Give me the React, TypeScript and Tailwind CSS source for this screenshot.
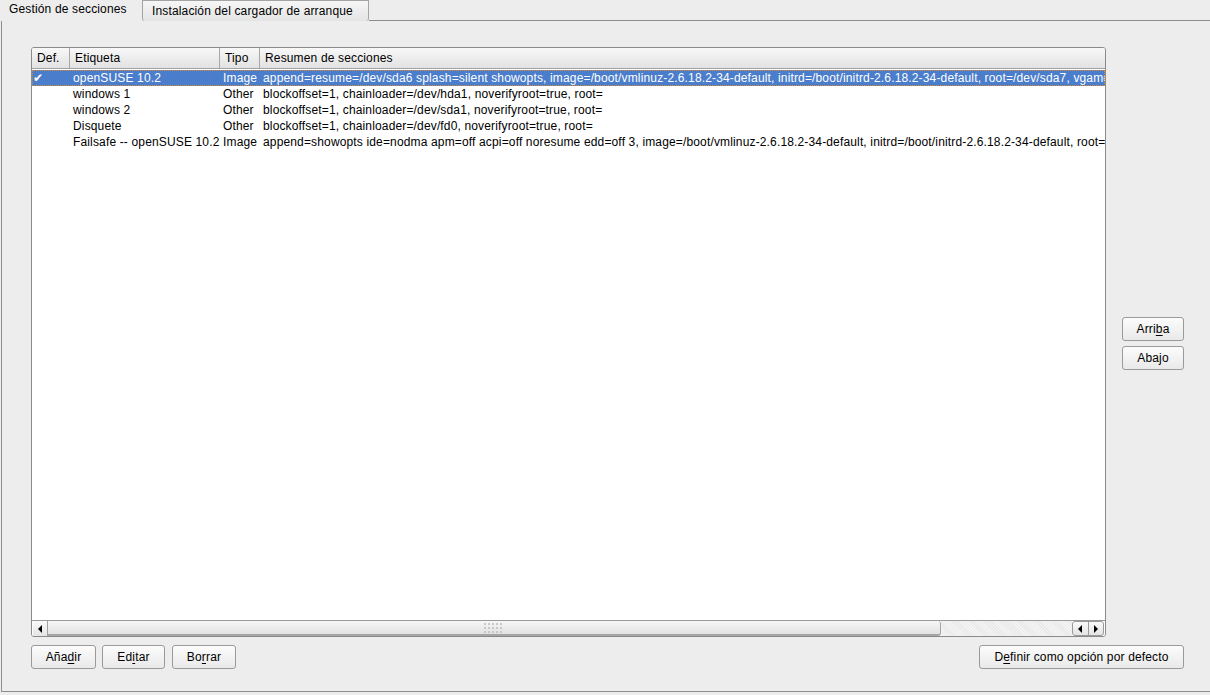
import React from "react";

type Row = { def: boolean; label: string; type: string; summary: string };

const ROWS: Row[] = [
  {
    def: true,
    label: "openSUSE 10.2",
    type: "Image",
    summary:
      "append=resume=/dev/sda6 splash=silent showopts, image=/boot/vmlinuz-2.6.18.2-34-default, initrd=/boot/initrd-2.6.18.2-34-default, root=/dev/sda7, vgamode=0x314",
  },
  { def: false, label: "windows 1", type: "Other", summary: "blockoffset=1, chainloader=/dev/hda1, noverifyroot=true, root=" },
  { def: false, label: "windows 2", type: "Other", summary: "blockoffset=1, chainloader=/dev/sda1, noverifyroot=true, root=" },
  { def: false, label: "Disquete", type: "Other", summary: "blockoffset=1, chainloader=/dev/fd0, noverifyroot=true, root=" },
  {
    def: false,
    label: "Failsafe -- openSUSE 10.2",
    type: "Image",
    summary:
      "append=showopts ide=nodma apm=off acpi=off noresume edd=off 3, image=/boot/vmlinuz-2.6.18.2-34-default, initrd=/boot/initrd-2.6.18.2-34-default, root=/dev/sda7",
  },
];

// button with an underlined mnemonic letter
function Btn({ pre, key_, post, w }: { pre: string; key_: string; post: string; w: string }) {
  return (
    <button
      className={`${w} h-[24px] rounded-[3px] border border-[#9a9a9a] bg-gradient-to-b from-[#fcfcfc] to-[#e9e9e9] text-[12px] text-black leading-none flex items-center justify-center`}
    >
      {pre}
      <span className="underline underline-offset-2">{key_}</span>
      {post}
    </button>
  );
}

function Arrow({ dir }: { dir: "l" | "r" }) {
  return (
    <svg width="6" height="8" viewBox="0 0 6 8">
      {dir === "l" ? <path d="M5 0 L1 4 L5 8 Z" fill="#000" /> : <path d="M1 0 L5 4 L1 8 Z" fill="#000" />}
    </svg>
  );
}

export default function App() {
  return (
    <div className="w-[1210px] h-[695px] bg-[#ededed] overflow-hidden font-['Liberation_Sans',Arial,sans-serif] text-[12px] tracking-[0.15px] text-black">
      {/* Tabs */}
      <div className="flex h-[21px] items-end">
        <div className="w-[142px] h-[21px] pl-[9px] pt-[1px] leading-[16px]">Gestión de secciones</div>
        <div className="w-[227px] h-[21px] -mt-[1px] border border-b-0 border-[#a3a3a3] rounded-b-[3px] bg-gradient-to-b from-[#f6f6f6] to-[#e4e4e4] pl-[9px] pt-[1px] leading-[18px]">
          Instalación del cargador de arranque
        </div>
        <div className="flex-1 h-[21px] border-b border-[#8e8e8e]" />
      </div>

      {/* Panel */}
      <div className="ml-[1px] w-[1230px] h-[671px] border-l border-b border-[#8e8e8e] pl-[29px] pt-[26px]">
        <div className="flex items-center gap-[16px]">
          {/* Table */}
          <div className="w-[1075px] h-[590px] border border-[#8a8a8a] rounded-[3px] bg-white flex flex-col overflow-hidden">
            <div className="h-[21px] flex border-b border-[#a0a0a0] bg-gradient-to-b from-[#f8f8f8] to-[#e2e2e2] leading-[21px]">
              <div className="w-[38px] pl-[5px] border-r border-[#a8a8a8]">Def.</div>
              <div className="w-[150px] pl-[5px] border-r border-[#a8a8a8]">Etiqueta</div>
              <div className="w-[40px] pl-[5px] border-r border-[#a8a8a8]">Tipo</div>
              <div className="flex-1 pl-[5px]">Resumen de secciones</div>
            </div>
            <div className="flex-1 pt-[1px]">
              {ROWS.map((r, i) => (
                <div
                  key={i}
                  className={`h-[16px] flex whitespace-nowrap leading-[16px] ${
                    r.def ? "bg-[#4a7dcb] text-white outline-1 outline-dotted outline-[#d9882a] -outline-offset-1" : ""
                  }`}
                >
                  <div className="w-[38px] pl-[1px]">{r.def ? "✔" : ""}</div>
                  <div className="w-[150px] pl-[3px]">{r.label}</div>
                  <div className="w-[40px] pl-[3px]">{r.type}</div>
                  <div className="flex-1 pl-[3px] overflow-hidden">{r.summary}</div>
                </div>
              ))}
            </div>
            {/* Horizontal scrollbar */}
            <div className="h-[16px] flex items-stretch border-t border-[#9a9a9a] bg-white px-[1px]">
              <div className="w-[15px] flex items-center justify-center border-r border-[#a0a0a0] bg-gradient-to-b from-[#fafafa] to-[#e4e4e4]">
                <Arrow dir="l" />
              </div>
              <div className="w-[893px] border-b-2 border-r border-[#a5a5a5] rounded-r-[3px] bg-gradient-to-b from-[#f7f7f7] to-[#e2e2e2] flex items-center pl-[436px]">
                <div className="grid grid-cols-5 gap-[2px]">
                  {Array.from({ length: 15 }).map((_, k) => (
                    <span key={k} className="w-[2px] h-[2px] bg-[#c8c8c8]" />
                  ))}
                </div>
              </div>
              <div className="flex-1 bg-[repeating-linear-gradient(45deg,#f4f4f4_0px,#f4f4f4_1px,#e9e9e9_1px,#e9e9e9_2px)]" />
              <div className="w-[32px] flex border border-[#9a9a9a] rounded-[3px] bg-gradient-to-b from-[#fafafa] to-[#e4e4e4]">
                <div className="flex-1 flex items-center justify-center border-r border-[#9a9a9a]">
                  <Arrow dir="l" />
                </div>
                <div className="flex-1 flex items-center justify-center">
                  <Arrow dir="r" />
                </div>
              </div>
            </div>
          </div>

          {/* Up / down */}
          <div className="flex flex-col gap-[5px] pt-[2px]">
            <Btn pre="Arri" key_="b" post="a" w="w-[62px]" />
            <Btn pre="Aba" key_="j" post="o" w="w-[62px]" />
          </div>
        </div>

        {/* Bottom buttons */}
        <div className="w-[1153px] flex items-center mt-[8px]">
          <Btn pre="Aña" key_="d" post="ir" w="w-[65px]" />
          <div className="w-[6px]" />
          <Btn pre="Ed" key_="i" post="tar" w="w-[63px]" />
          <div className="w-[7px]" />
          <Btn pre="Bo" key_="r" post="rar" w="w-[64px]" />
          <div className="flex-1" />
          <Btn pre="D" key_="e" post="finir como opción por defecto" w="w-[205px]" />
        </div>
      </div>
    </div>
  );
}
